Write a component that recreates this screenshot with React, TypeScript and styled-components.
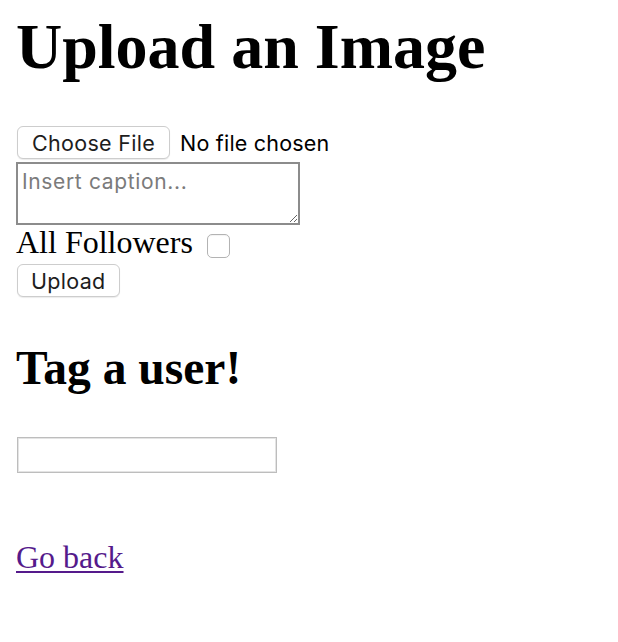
import React from "react";
import styled, { createGlobalStyle } from "styled-components";

const GlobalStyle = createGlobalStyle`
  html, body {
    margin: 0;
    padding: 0;
    background: #ffffff;
  }
  * {
    box-sizing: border-box;
  }
`;

const Page = styled.div`
  display: flex;
  flex-direction: column;
  align-items: flex-start;
  padding: 12px 16px 40px;
  font-family: "Liberation Serif", "Times New Roman", serif;
  color: #000;
`;

const Title = styled.h1`
  margin: 0;
  font-size: 64px;
  line-height: 70px;
  font-weight: bold;
`;

const UploadForm = styled.form`
  display: flex;
  flex-direction: column;
  align-items: flex-start;
  margin: 44px 0 0;
`;

const FileRow = styled.label`
  display: flex;
  align-items: center;
  gap: 10px;
  margin-left: 1px;
  font-family: Inter, "Liberation Sans", Arial, sans-serif;
  font-size: 21.5px;
  cursor: default;
`;

const HiddenFile = styled.input`
  display: none;
`;

const ControlButton = styled.span<{ $pad?: number }>`
  display: inline-flex;
  align-items: center;
  height: 33px;
  padding: 1px ${(p) => p.$pad ?? 14}px 0;
  background: #ffffff;
  border: 1px solid #cdcdcd;
  border-radius: 6px;
  box-shadow: 0 1px 1px rgba(0, 0, 0, 0.08);
  font-family: Inter, "Liberation Sans", Arial, sans-serif;
  font-size: 21.5px;
  letter-spacing: 0.3px;
  color: #1d1d1d;
  white-space: nowrap;
`;

const FileStatus = styled.span`
  color: #000;
  letter-spacing: 0.2px;
  white-space: nowrap;
`;

const Caption = styled.textarea`
  display: block;
  width: 284px;
  height: 63px;
  margin: 3px 0 0;
  padding: 5px 4px 4px;
  border: 2px solid #8c8c8c;
  border-radius: 0;
  font-family: Inter, "Liberation Sans", Arial, sans-serif;
  font-size: 21px;
  line-height: 25px;
  letter-spacing: 0.65px;
  color: #000;
  background: #fff;
  outline: none;
  &::placeholder {
    color: #7b7b7b;
  }
`;

const FollowRow = styled.label`
  display: flex;
  align-items: flex-start;
  font-size: 32px;
  line-height: 34px;
`;

const Checkbox = styled.input`
  appearance: none;
  -webkit-appearance: none;
  width: 23px;
  height: 24px;
  margin: 9px 0 0 14px;
  border: 1px solid #b3b3b3;
  border-radius: 5px;
  background: #fff;
  box-shadow: inset 0 1px 1px rgba(0, 0, 0, 0.05);
`;

const UploadButton = styled.button`
  margin: 5px 0 0 1px;
  padding: 0;
  border: none;
  background: none;
  cursor: default;
`;

const Subtitle = styled.h2`
  margin: 45px 0 0;
  font-size: 47.5px;
  line-height: 52px;
  font-weight: bold;
`;

const TagInput = styled.input`
  display: block;
  width: 260px;
  height: 36px;
  margin: 43px 0 0 1px;
  padding: 0 6px;
  border: 1px solid #bdbdbd;
  box-shadow: inset 0 0 0 1px #e4e4e4;
  border-radius: 0;
  background: #fff;
  font-family: Inter, "Liberation Sans", Arial, sans-serif;
  font-size: 21px;
  outline: none;
`;

const BackLine = styled.p`
  margin: 66px 0 0;
  font-size: 32px;
  line-height: 36px;
`;

const BackLink = styled.a`
  color: #551a8b;
  text-decoration: underline;
  text-decoration-thickness: 2px;
  text-underline-offset: 3px;
`;

export default function App() {
  return (
    <>
      <GlobalStyle />
      <Page>
        <Title>Upload an Image</Title>
        <UploadForm onSubmit={(e) => e.preventDefault()}>
          <FileRow>
            <HiddenFile type="file" accept="image/*" />
            <ControlButton>Choose File</ControlButton>
            <FileStatus>No file chosen</FileStatus>
          </FileRow>
          <Caption placeholder="Insert caption..." />
          <FollowRow>
            All Followers
            <Checkbox type="checkbox" />
          </FollowRow>
          <UploadButton type="submit">
            <ControlButton $pad={13}>Upload</ControlButton>
          </UploadButton>
        </UploadForm>
        <Subtitle>Tag a user!</Subtitle>
        <TagInput type="text" />
        <BackLine>
          <BackLink href="#">Go back</BackLink>
        </BackLine>
      </Page>
    </>
  );
}
